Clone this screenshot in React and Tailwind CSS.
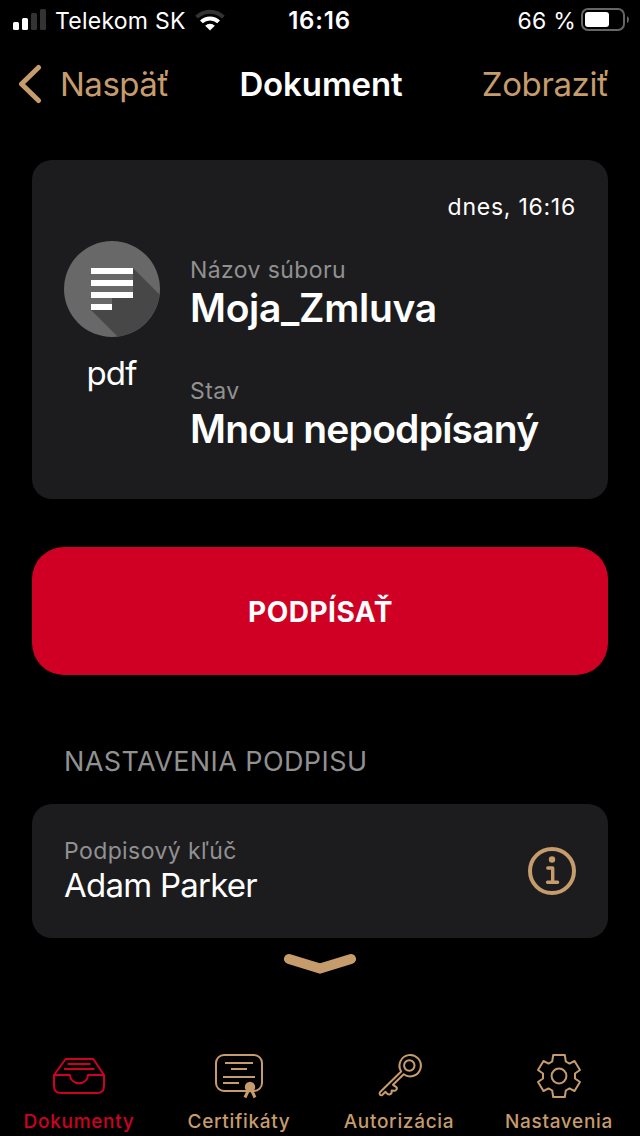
import React from 'react';

const SignalIcon = () => (
    <svg className="shrink-0" width="34" height="22" viewBox="0 0 34 22">
        <rect x="0" y="13" width="6" height="8" rx="1.5" fill="#fff" />
        <rect x="9" y="9" width="6" height="12" rx="1.5" fill="#fff" />
        <rect x="18" y="4" width="6" height="17" rx="1.5" fill="#333" />
        <rect x="27" y="0" width="6" height="21" rx="1.5" fill="#333" />
    </svg>
);

const WifiIcon = () => (
    <svg className="shrink-0" width="30" height="22" viewBox="0 0 30 22" fill="none">
        <path d="M1.6 8.1 A19.2 19.2 0 0 1 28.4 8.1" stroke="#333" strokeWidth="4" />
        <path d="M6.4 12.9 A12.4 12.4 0 0 1 23.6 12.9" stroke="#fff" strokeWidth="4" />
        <path d="M15 21.5 L10.2 16.7 A6.8 6.8 0 0 1 19.8 16.7 Z" fill="#fff" />
    </svg>
);

const BatteryIcon = () => (
    <svg className="shrink-0" width="48" height="24" viewBox="0 0 48 24">
        <rect x="1" y="1" width="42" height="21" rx="6" fill="none" stroke="#666" strokeWidth="2" />
        <rect x="4" y="4" width="24" height="15" rx="3" fill="#fff" />
        <path d="M46 8 Q48 9 48 11.5 Q48 14 46 15 Z" fill="#666" />
    </svg>
);

const FileIcon = () => (
    <svg width="96" height="96" viewBox="0 0 96 96">
        <defs>
            <clipPath id="disc">
                <circle cx="48" cy="48" r="48" />
            </clipPath>
        </defs>
        <g clipPath="url(#disc)">
            <rect width="96" height="96" fill="#686868" />
            <path d="M69 27 L116 74 V116 H74 L27 69 H48 V57 H69 Z" fill="#474747" />
        </g>
        <path d="M27 27h42v6H27z M27 39h42v6H27z M27 51h42v6H27z M27 63h21v6H27z" fill="#fff" />
    </svg>
);

const InfoIcon = () => (
    <svg width="48" height="48" viewBox="0 0 48 48" fill="none" stroke="#c69c6d" strokeLinecap="round" strokeLinejoin="round">
        <circle cx="24" cy="24" r="22" strokeWidth="4" />
        <circle cx="24" cy="12.5" r="3.2" fill="#c69c6d" stroke="none" />
        <path d="M19.8 21 H24.7 V35.3 M19.6 35.3 H29.6" strokeWidth="3.4" />
    </svg>
);

const TabIcon = ({ children }) => (
    <svg width="60" height="60" viewBox="0 0 60 60" fill="none" stroke="currentColor" strokeWidth="2" strokeLinejoin="round">
        {children}
    </svg>
);

const tabs = [
    {
        label: 'Dokumenty',
        active: true,
        icon: (
            <TabIcon>
                <path d="M5 29 L16.7 13 H44.3 L55 29 V40 Q55 47 48 47 H12 Q5 47 5 40 Z" />
                <path d="M5 29 H21 A9 8.3 0 0 0 39 29 H55" />
                <path d="M18.5 18 H41.5 M15 23 H45.5" />
            </TabIcon>
        ),
    },
    {
        label: 'Certifikáty',
        icon: (
            <TabIcon>
                <rect x="7" y="9" width="46" height="36" rx="8" />
                <path d="M16 17 H44 M22 23 H38 M14 31 H46 M14 37 H30" />
                <path d="M40 43 L36 51.5 M42 43 L46 51.5" strokeWidth="3" />
                <circle cx="41" cy="41" r="5.2" fill="currentColor" stroke="none" />
            </TabIcon>
        ),
    },
    {
        label: 'Autorizácia',
        icon: (
            <TabIcon>
                <path d="M32.2 25.5 A10.7 10.7 0 1 1 34.7 28.2 L24 38.8 L27 40.8 Q28.6 42.2 27.3 43.7 Q26.6 44.8 25.3 44.7 L22.7 44.6 Q23 48.3 20.3 48.6 Q18.8 48.8 16.5 45.8 L13.5 48.7 Q12.2 49.8 11 48.8 Q10 47.2 11.2 46 Z" />
                <circle cx="40.3" cy="19.5" r="5.2" />
            </TabIcon>
        ),
    },
    {
        label: 'Nastavenia',
        icon: (
            <TabIcon>
                <path d="M24.2 9 H35.8 L36.8 15.5 L40.5 17.6 L45.5 15 L51 24 L46 27.5 V32.5 L51 36 L45.5 45 L40.5 42.4 L36.8 44.5 L35.8 51 H24.2 L23.2 44.5 L19.5 42.4 L14.5 45 L9 36 L14 32.5 V27.5 L9 24 L14.5 15 L19.5 17.6 L23.2 15.5 Z" />
                <circle cx="30" cy="30" r="7.4" />
            </TabIcon>
        ),
    },
];

const StatusBar = () => (
    <div className="grid h-10 grid-cols-3 items-center pl-[13px] pr-[11px] text-[23px] text-white">
        <div className="flex items-center whitespace-nowrap">
            <SignalIcon />
            <span className="ml-2 pt-0.5 tracking-[0.25px]">Telekom SK</span>
            <span className="ml-[9px] shrink-0"><WifiIcon /></span>
        </div>
        <span className="pt-0.5 pr-[3px] text-center text-[24px] font-semibold tracking-[0.8px]">16:16</span>
        <div className="flex items-center justify-end whitespace-nowrap">
            <span className="mr-[5px] pt-0.5 tracking-[0.2px]">66 %</span>
            <BatteryIcon />
        </div>
    </div>
);

const NavBar = () => (
    <div className="grid h-22 grid-cols-3 items-center px-[18px] text-[33px] text-[#c69c6d]">
        <button className="flex items-center">
            <svg width="24" height="40" viewBox="0 0 24 40" fill="none">
                <path d="M20.5 3.5 L3.5 20 L20.5 36.5" stroke="currentColor" strokeWidth="5" strokeLinecap="round" strokeLinejoin="round" />
            </svg>
            <span className="ml-[18px] pt-0.5 tracking-[-0.5px]">Naspäť</span>
        </button>
        <h1 className="pt-0.5 pl-0.5 text-center font-semibold tracking-[-0.1px] text-white">Dokument</h1>
        <button className="pt-0.5 pr-[13px] text-right tracking-[-0.4px]">Zobraziť</button>
    </div>
);

const DocumentCard = () => (
    <section className="h-[339px] rounded-[20px] bg-[#1c1c1e] px-8 pt-8">
        <p className="text-right text-[23px] leading-[30px] tracking-[0.75px] text-white">dnes, 16:16</p>
        <div className="mt-[19px] flex">
            <div className="flex w-24 flex-col items-center">
                <FileIcon />
                <span className="mt-4 pr-px text-[33px] leading-10 tracking-[-0.8px] text-white">pdf</span>
            </div>
            <div className="ml-[30px] pt-[14px] whitespace-nowrap">
                <p className="text-[23px] leading-[30px] tracking-[0.4px] text-[#919191]">Názov súboru</p>
                <p className="-mt-px text-[39px] leading-[48px] font-semibold tracking-[-0.3px] text-white">Moja_Zmluva</p>
                <p className="mt-11 text-[23px] leading-[30px] tracking-[0.4px] text-[#919191]">Stav</p>
                <p className="-mt-px text-[39px] leading-[48px] font-semibold tracking-[-0.8px] text-white">Mnou nepodpísaný</p>
            </div>
        </div>
    </section>
);

const KeyCard = () => (
    <section className="mt-6 flex h-[134px] items-center justify-between rounded-[20px] bg-[#1c1c1e] px-8">
        <div>
            <p className="text-[23px] leading-[30px] tracking-[0.4px] text-[#919191]">Podpisový kľúč</p>
            <p className="-mt-px mb-px text-[33px] leading-10 tracking-[-0.75px] text-white">Adam Parker</p>
        </div>
        <InfoIcon />
    </section>
);

const TabBar = () => (
    <nav className="mt-auto -ml-px grid w-[640px] grid-cols-4">
        {tabs.map((tab) => (
            <button
                key={tab.label}
                className={`flex flex-col items-center ${tab.active ? 'text-[#cf0023]' : 'text-[#c69c6d]'}`}
            >
                {tab.icon}
                <span className="mt-0.5 text-[19px] leading-7 font-medium tracking-[0.7px]">{tab.label}</span>
            </button>
        ))}
    </nav>
);

const App = () => {
    return (
        <div className="flex h-[1136px] w-[640px] flex-col overflow-hidden bg-black font-['Inter',sans-serif]">
            <StatusBar />
            <NavBar />
            <main className="flex flex-col px-8 pt-8">
                <DocumentCard />
                <button className="mt-12 h-32 rounded-[32px] bg-[#cf0023] pt-0.5 pl-px text-[28px] font-bold tracking-[0.5px] text-white">
                    PODPÍSAŤ
                </button>
                <h2 className="mt-[69px] ml-8 text-[27px] leading-9 tracking-[0.4px] text-[#919191]">NASTAVENIA PODPISU</h2>
                <KeyCard />
                <svg className="mt-[15px] self-center" width="72" height="22" viewBox="0 0 72 22" fill="none">
                    <path d="M5 6 L36 15.5 L67 6" stroke="#c69c6d" strokeWidth="10" strokeLinecap="round" />
                </svg>
            </main>
            <TabBar />
        </div>
    );
};

export default App;
